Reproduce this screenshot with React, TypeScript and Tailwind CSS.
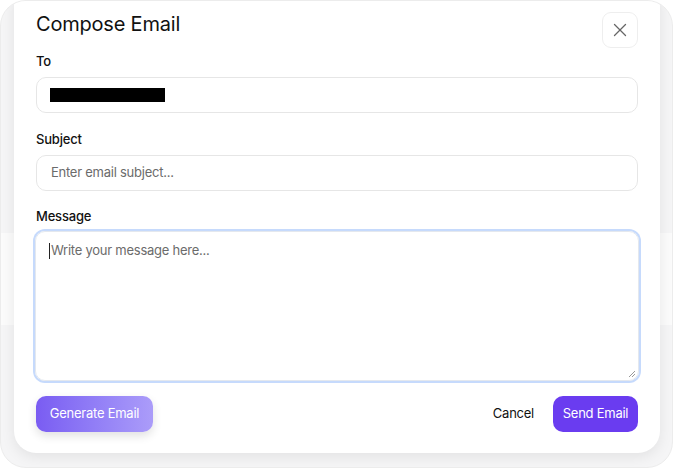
import { X } from "lucide-react";

export default function App() {
  return (
    <div className="h-[468px] w-[673px] bg-white" style={{ fontFamily: "Inter, 'Noto Sans', sans-serif" }}>
      <div className="relative h-full w-full overflow-hidden rounded-[26px] border border-[#ececec] bg-[#f5f5f6]">
        <div className="absolute left-0 right-0 top-[232px] h-[92px] bg-[#fbfbfb]" />
        <div className="relative ml-[13px] mr-[12px] -mt-[20px] rounded-[22px] bg-white px-[22px] pb-[21px] pt-[31px] shadow-[0_4px_14px_rgba(0,0,0,0.08)]">
          <div className="flex h-[36px] items-start justify-between">
            <h2 className="-mt-[1px] text-[20px] leading-[26px] tracking-[-0.2px] text-[#111]">Compose Email</h2>
            <button
              type="button"
              className="flex h-[36px] w-[36px] items-center justify-center rounded-[9px] border border-[#eeeeee] text-[#666]"
            >
              <X size={22} strokeWidth={1.4} />
            </button>
          </div>

          <div className="mt-[4px]">
            <label className="block text-[13px] font-medium leading-[18px] tracking-[-0.2px] text-[#111]">To</label>
            <div className="mt-[7px] flex h-[36px] items-center rounded-[10px] border border-[#e6e6e6] px-[13px]">
              <div className="h-[14px] w-[115px] bg-black" />
            </div>
          </div>

          <div className="mt-[17px]">
            <label className="block text-[13px] font-medium leading-[18px] tracking-[-0.2px] text-[#111]">Subject</label>
            <div className="mt-[7px] flex h-[36px] items-center rounded-[10px] border border-[#e6e6e6] px-[14px]">
              <span className="text-[13px] tracking-[-0.25px] text-[#6b6b6b]">Enter email subject...</span>
            </div>
          </div>

          <div className="mt-[16px]">
            <label className="block text-[13px] font-medium leading-[18px] tracking-[-0.2px] text-[#111]">Message</label>
            <div className="relative -mx-[1px] mt-[6px] h-[150px] rounded-[10px] border border-[#e4e8ee] px-[13px] py-[9px] ring-[2px] ring-[#c6dafc]">
              <div className="flex items-center">
                <span className="mr-[1px] inline-block h-[16px] w-[1px] bg-[#222]" />
                <span className="text-[13px] tracking-[-0.25px] text-[#6b6b6b]">Write your message here...</span>
              </div>
              <svg className="absolute bottom-[2px] right-[2px]" width="9" height="9" viewBox="0 0 9 9">
                <path d="M8 2 L2 8 M8 5 L5 8" stroke="#999" strokeWidth="1" />
              </svg>
            </div>
          </div>

          <div className="mt-[15px] flex items-center justify-between">
            <button
              type="button"
              className="h-[36px] w-[117px] rounded-[10px] bg-gradient-to-r from-[#7a5cf2] to-[#ab9cf9] text-[13px] tracking-[-0.25px] text-white shadow-[0_4px_10px_rgba(0,0,0,0.12)]"
            >
              Generate Email
            </button>
            <div className="flex items-center gap-[19px]">
              <button type="button" className="text-[13px] tracking-[-0.25px] text-[#111]">
                Cancel
              </button>
              <button
                type="button"
                className="h-[36px] w-[85px] rounded-[10px] bg-[#6a3cf0] text-[13px] tracking-[-0.25px] text-white"
              >
                Send Email
              </button>
            </div>
          </div>
        </div>
      </div>
    </div>
  );
}
